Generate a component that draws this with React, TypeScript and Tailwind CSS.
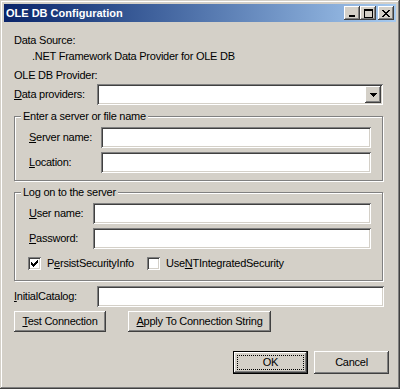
import React from "react";

const sunken =
  "bg-white shadow-[inset_1px_1px_0_#808080,inset_-1px_-1px_0_#ffffff,inset_2px_2px_0_#404040,inset_-2px_-2px_0_#d4d0c8]";
const raised =
  "bg-[#d4d0c8] shadow-[inset_-1px_-1px_0_#404040,inset_1px_1px_0_#ffffff,inset_-2px_-2px_0_#808080,inset_2px_2px_0_#d4d0c8]";
const etched = "border border-[#808080] shadow-[inset_1px_1px_0_#ffffff,1px_1px_0_#ffffff]";

// tiny pixel-art glyphs (caption buttons, check mark, combo arrow)
function Pixels({ rows }: { rows: string[] }) {
  const w = rows[0].length;
  const h = rows.length;
  return (
    <svg width={w} height={h} viewBox={`0 0 ${w} ${h}`} shapeRendering="crispEdges">
      {rows.flatMap((r, y) =>
        r.split("").map((c, x) =>
          c === "#" ? <rect key={`${x}-${y}`} x={x} y={y} width={1} height={1} fill="#000" /> : null
        )
      )}
    </svg>
  );
}

const MIN = ["......", "......", "......", "......", "......", "......", "######", "######"];
const MAX = [
  "#########",
  "#########",
  "#.......#",
  "#.......#",
  "#.......#",
  "#.......#",
  "#.......#",
  "#.......#",
  "#########",
];
const CLOSE = ["##....##", ".##..##.", "..####..", "...##...", "..####..", ".##..##.", "##....##"];
const CHECK = ["......#", ".....##", "#...###", "##.###.", "#####..", ".###...", "..#...."];
const ARROW = ["#######", ".#####.", "..###..", "...#..."];

function CapButton({ glyph, className = "" }: { glyph: string[]; className?: string }) {
  return (
    <div className={`w-[16px] h-[14px] flex items-center justify-center ${raised} ${className}`}>
      <Pixels rows={glyph} />
    </div>
  );
}

function Label({ k, rest, className = "" }: { k: string; rest: string; className?: string }) {
  return (
    <span className={`leading-[13px] ${className}`}>
      <u className="underline-offset-[1px]">{k}</u>
      {rest}
    </span>
  );
}

function Edit({ className }: { className: string }) {
  return <div className={`h-[21px] ${sunken} ${className}`} />;
}

function Check({ checked }: { checked: boolean }) {
  return (
    <div className={`w-[13px] h-[13px] shrink-0 flex items-center justify-center ${sunken}`}>
      {checked && <Pixels rows={CHECK} />}
    </div>
  );
}

function Button({ children, className = "" }: { children: React.ReactNode; className?: string }) {
  return (
    <div className={`flex items-center justify-center leading-[13px] ${raised} ${className}`}>{children}</div>
  );
}

export default function App() {
  return (
    <div className="w-[400px] h-[389px] overflow-hidden bg-[#d4d0c8] p-[4px] text-[11px] text-black font-['Liberation_Sans',Arial,sans-serif] shadow-[inset_-1px_-1px_0_#404040,inset_1px_1px_0_#d4d0c8,inset_-2px_-2px_0_#808080,inset_2px_2px_0_#ffffff]">
      <div className="h-[18px] flex items-center px-[2px] bg-linear-to-r from-[#0a246a] to-[#a6caf0]">
        <span className="flex-1 font-bold text-white leading-[13px]">OLE DB Configuration</span>
        <CapButton glyph={MIN} />
        <CapButton glyph={MAX} />
        <CapButton glyph={CLOSE} className="ml-[2px]" />
      </div>

      <div className="flex flex-col pl-[10px] tracking-[-0.25px]">
        <div className="mt-[12px] leading-[13px]">Data Source:</div>
        <div className="mt-[3px] pl-[18px] leading-[13px]">.NET Framework Data Provider for OLE DB</div>
        <div className="mt-[6px] leading-[13px]">OLE DB Provider:</div>

        <div className="mt-[2px] h-[21px] flex items-center">
          <Label k="D" rest="ata providers:" className="w-[83px]" />
          <div className={`w-[286px] h-[21px] p-[2px] flex justify-end ${sunken}`}>
            <div className={`w-[16px] h-[17px] flex items-center justify-center ${raised}`}>
              <Pixels rows={ARROW} />
            </div>
          </div>
        </div>

        <div className={`mt-[11px] w-[369px] pb-[7px] ${etched}`}>
          <div className="-mt-[7px] ml-[6px] w-fit px-[2px] bg-[#d4d0c8] leading-[13px]">
            Enter a server or file name
          </div>
          <div className="mt-[4px] pl-[14px] h-[21px] flex items-center">
            <Label k="S" rest="erver name:" className="w-[72px]" />
            <Edit className="w-[270px]" />
          </div>
          <div className="mt-[4px] pl-[14px] h-[21px] flex items-center">
            <Label k="L" rest="ocation:" className="w-[72px]" />
            <Edit className="w-[270px]" />
          </div>
        </div>

        <div className={`mt-[11px] w-[369px] pb-[10px] ${etched}`}>
          <div className="-mt-[7px] ml-[6px] w-fit px-[2px] bg-[#d4d0c8] leading-[13px]">Log on to the server</div>
          <div className="mt-[4px] pl-[14px] h-[21px] flex items-center">
            <Label k="U" rest="ser name:" className="w-[64px]" />
            <Edit className="w-[278px]" />
          </div>
          <div className="mt-[4px] pl-[14px] h-[21px] flex items-center">
            <Label k="P" rest="assword:" className="w-[64px]" />
            <Edit className="w-[278px]" />
          </div>
          <div className="mt-[8px] pl-[13px] h-[13px] flex items-center">
            <div className="w-[119px] flex items-center gap-[6px]">
              <Check checked />
              <span className="leading-[13px]">
                P<u className="underline-offset-[1px]">e</u>rsistSecurityInfo
              </span>
            </div>
            <div className="flex items-center gap-[6px]">
              <Check checked={false} />
              <span className="leading-[13px]">
                Use<u className="underline-offset-[1px]">N</u>TIntegratedSecurity
              </span>
            </div>
          </div>
        </div>

        <div className="mt-[5px] h-[21px] flex items-center">
          <Label k="I" rest="nitialCatalog:" className="w-[83px]" />
          <Edit className="w-[287px]" />
        </div>

        <div className="mt-[4px] flex">
          <Button className="w-[92px] h-[21px]">
            <Label k="T" rest="est Connection" />
          </Button>
          <Button className="ml-[22px] w-[143px] h-[21px]">
            <Label k="A" rest="pply To Connection String" />
          </Button>
        </div>

        <div className="mt-[19px] flex justify-end gap-[6px] pr-[7px]">
          <div className="w-[75px] h-[23px] border border-black">
            <Button className="w-full h-full">
              <span className="w-[67px] h-[15px] flex items-center justify-center border border-dotted border-black leading-[13px]">
                OK
              </span>
            </Button>
          </div>
          <Button className="w-[75px] h-[23px]">Cancel</Button>
        </div>
      </div>
    </div>
  );
}
